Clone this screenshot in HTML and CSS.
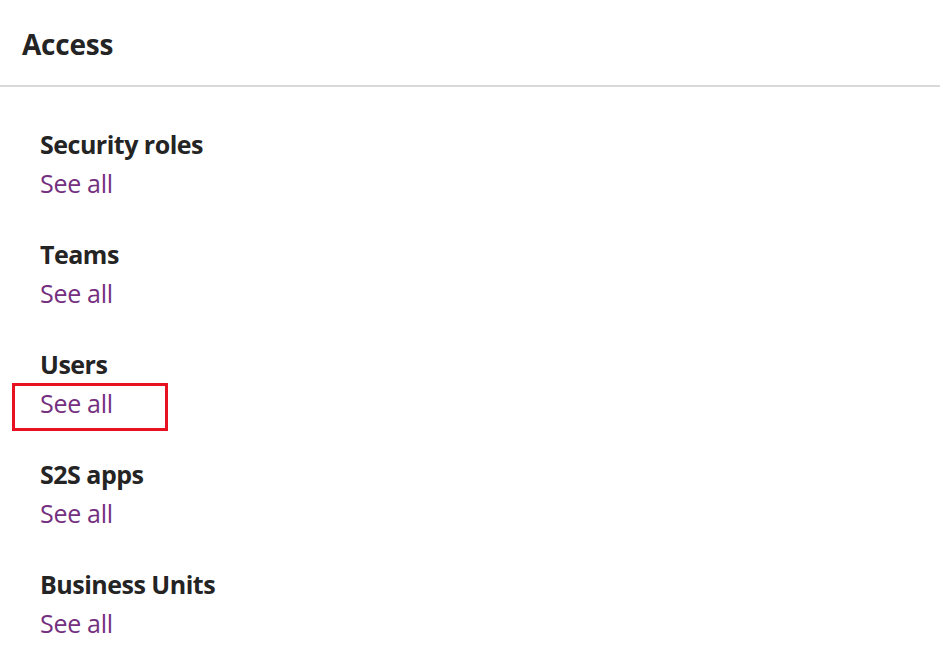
FILE: index.html
```html
<!DOCTYPE html>
<html>
<head>
<meta charset="utf-8">
<link rel="stylesheet" href="styles.css">
</head>
<body>
<div class="page">
  <header class="header"><h1 class="title">Access</h1></header>
  <ul class="list">
    <li class="item"><div class="item-title">Security roles</div><a class="link" href="#">See all</a></li>
    <li class="item"><div class="item-title">Teams</div><a class="link" href="#">See all</a></li>
    <li class="item"><div class="item-title">Users</div><span class="link-wrap"><a class="link" href="#">See all</a><span class="highlight"></span></span></li>
    <li class="item"><div class="item-title">S2S apps</div><a class="link" href="#">See all</a></li>
    <li class="item"><div class="item-title">Business Units</div><a class="link" href="#">See all</a></li>
  </ul>
</div>
</body>
</html>
```
FILE: styles.css
```css
html, body { margin: 0; padding: 0; background: #fff; }
body { font-family: "Open Sans", "Noto Sans", sans-serif; color: #242424; }
.page { width: 940px; height: 650px; overflow: hidden; }
.header { height: 85px; border-bottom: 2px solid #d9d9d9; padding-left: 22px; display: flex; align-items: flex-start; }
.title { margin: 0; padding-top: 26px; font-size: 28px; font-weight: 700; line-height: 36px; letter-spacing: -0.2px; }
.list { list-style: none; margin: 0; padding: 39px 0 0 40px; display: flex; flex-direction: column; gap: 32px; }
.item { display: flex; flex-direction: column; align-items: flex-start; }
.item-title { font-size: 25px; font-weight: 700; line-height: 36px; letter-spacing: -0.5px; }
.link { display: block; font-size: 25px; line-height: 42px; color: #74307f; text-decoration: none; letter-spacing: -0.3px; }
.link-wrap { position: relative; display: block; }
.highlight { position: absolute; left: -28px; top: 1px; width: 150px; height: 42px; border: 3px solid #e8111f; }
```
